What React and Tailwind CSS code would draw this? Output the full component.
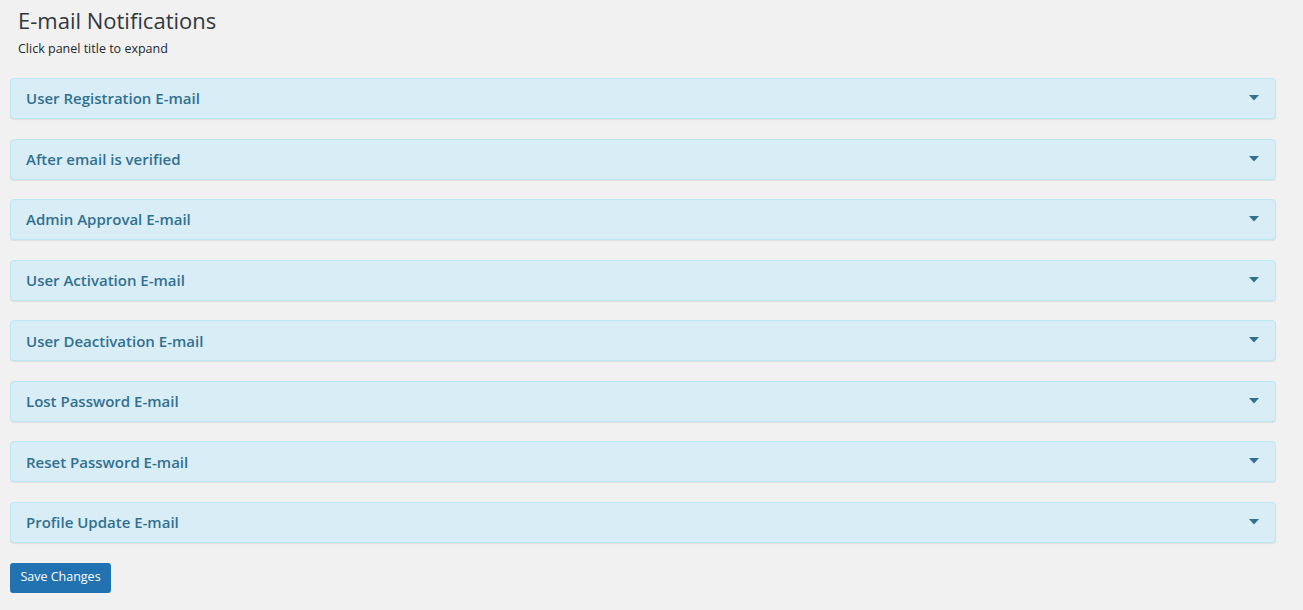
import React from 'react';

const panels = [
  'User Registration E-mail',
  'After email is verified',
  'Admin Approval E-mail',
  'User Activation E-mail',
  'User Deactivation E-mail',
  'Lost Password E-mail',
  'Reset Password E-mail',
  'Profile Update E-mail',
];

const Panel = ({ title }) => (
  <div className="mb-[19.57px] h-[41px] rounded-[4px] border border-[#bce8f1] bg-[#d9edf7] shadow-[0_1px_1px_rgba(0,0,0,0.08)]">
    <div className="flex h-full cursor-pointer items-center justify-between pl-[15px] pr-[16px]">
      <span className="text-[15px] font-semibold text-[#31708f]">{title}</span>
      <svg width="10" height="6" viewBox="0 0 10 6" className="mb-[1px]">
        <path d="M0 0h10L5 5.5z" fill="#31708f" />
      </svg>
    </div>
  </div>
);

export default function App() {
  return (
    <div className="min-h-[610px] bg-[#f1f1f1] font-['Open_Sans','Noto_Sans',sans-serif] text-[#23282d]">
      <div className="pl-[10px] pr-[27px] pt-[6px]">
        <h1 className="pl-[8px] text-[22px] font-normal leading-[29px] text-[#32373c]">
          E-mail Notifications
        </h1>
        <p className="pl-[8px] pt-[5px] text-[12.5px] leading-[18px] text-[#23282d]">
          Click panel title to expand
        </p>
        <div className="pt-[20px]">
          {panels.map((t) => (
            <Panel key={t} title={t} />
          ))}
        </div>
        <button className="h-[30px] w-[101px] rounded-[3px] bg-[#2271b1] text-[12.5px] text-white">
          Save Changes
        </button>
      </div>
    </div>
  );
}
